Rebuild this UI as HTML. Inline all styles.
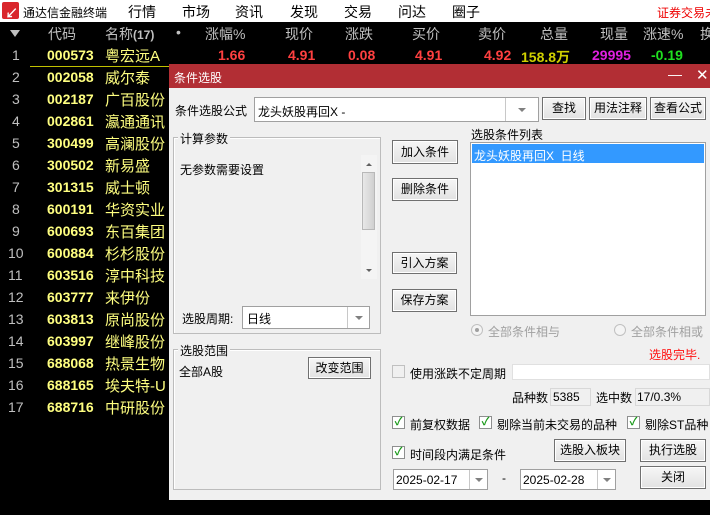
<!DOCTYPE html>
<html><head><meta charset="utf-8"><style>
*{margin:0;padding:0;box-sizing:border-box}
body{width:710px;height:515px;background:#000;position:relative;overflow:hidden;font-family:"Liberation Sans","Noto Sans CJK SC","WenQuanYi Zen Hei",sans-serif;font-size:12px}
.a{position:absolute;white-space:nowrap}
.menu{left:0;top:0;width:710px;height:22px;background:#fff}
.mi{top:2px;font-size:14px;color:#000}
.hd{color:#c0c0c0;font-size:14px;top:24px}
.num{color:#c0c0c0;font-size:14px;left:12px}
.code{color:#ffff80;font-size:14px;font-weight:bold;left:47px}
.name{color:#ffff80;font-size:15px;left:105px}
.dlg{left:169px;top:64px;width:541px;height:436px;background:#f0f0f0}
.btn{position:absolute;background:linear-gradient(#f6f6f6,#e2e2e2);border:1px solid #707070;text-align:center;font-size:12px;color:#000;box-shadow:inset 0 0 0 1px #fff}
.t{position:absolute;white-space:nowrap;font-size:12px;color:#000}
.box{position:absolute;background:#fff;border:1px solid #a0a0a0}
.grp{position:absolute;border:1px solid #bcbcbc;box-shadow:1px 1px 0 #fff inset}
.chk{position:absolute;width:13px;height:13px;border:1px solid #8e8f8f;background:#fff;color:#1a9a1a;font-size:11px;line-height:11px;text-align:center;font-weight:bold}
.arr{position:absolute;width:0;height:0;border-left:4px solid transparent;border-right:4px solid transparent;border-top:4px solid #808080}
</style></head><body>
<div class="a menu"></div>
<div class="a" style="left:2px;top:2px;width:17px;height:17px;background:#d9262c;border-radius:2px"></div>
<div class="a" style="left:5px;top:3px;color:#fff;font-weight:bold;font-size:13px">↙</div>
<div class="a" style="left:23px;top:4px;font-size:12px">通达信金融终端</div>
<div class="a mi" style="left:128px">行情</div>
<div class="a mi" style="left:182px">市场</div>
<div class="a mi" style="left:235px">资讯</div>
<div class="a mi" style="left:290px">发现</div>
<div class="a mi" style="left:344px">交易</div>
<div class="a mi" style="left:398px">问达</div>
<div class="a mi" style="left:452px">圈子</div>
<div class="a" style="left:657px;top:4px;font-size:12px;color:#e00">证券交易未</div>

<div class="a" style="left:10px;top:30px;width:0;height:0;border-left:5px solid transparent;border-right:5px solid transparent;border-top:7px solid #c0c0c0"></div>
<div class="a hd" style="left:48px">代码</div>
<div class="a hd" style="left:105px">名称<span style="font-size:12px;font-weight:bold">(17)</span></div>
<div class="a hd" style="left:176px">•</div>
<div class="a hd" style="left:205px">涨幅%</div>
<div class="a hd" style="left:285px">现价</div>
<div class="a hd" style="left:345px">涨跌</div>
<div class="a hd" style="left:412px">买价</div>
<div class="a hd" style="left:478px">卖价</div>
<div class="a hd" style="left:540px">总量</div>
<div class="a hd" style="left:600px">现量</div>
<div class="a hd" style="left:643px">涨速%</div>
<div class="a hd" style="left:700px">换</div>

<div class="a num" style="top:47px">1</div><div class="a code" style="top:47px">000573</div><div class="a name" style="top:45px">粤宏远A</div>
<div class="a" style="top:47px;left:218px;color:#ff4040;font-size:14px;font-weight:bold">1.66</div>
<div class="a" style="top:47px;left:288px;color:#ff4040;font-size:14px;font-weight:bold">4.91</div>
<div class="a" style="top:47px;left:348px;color:#ff4040;font-size:14px;font-weight:bold">0.08</div>
<div class="a" style="top:47px;left:415px;color:#ff4040;font-size:14px;font-weight:bold">4.91</div>
<div class="a" style="top:47px;left:484px;color:#ff4040;font-size:14px;font-weight:bold">4.92</div>
<div class="a" style="top:47px;left:521px;color:#d0d000;font-size:14px;font-weight:bold">158.8万</div>
<div class="a" style="top:47px;left:592px;color:#e020e0;font-size:14px;font-weight:bold">29995</div>
<div class="a" style="top:47px;left:651px;color:#20e020;font-size:14px;font-weight:bold">-0.19</div>
<div class="a" style="left:30px;top:66px;width:680px;height:1px;background:#c0c000"></div>

<div class="a num" style="top:69px">2</div><div class="a code" style="top:69px">002058</div><div class="a name" style="top:67px">威尔泰</div>
<div class="a num" style="top:91px">3</div><div class="a code" style="top:91px">002187</div><div class="a name" style="top:89px">广百股份</div>
<div class="a num" style="top:113px">4</div><div class="a code" style="top:113px">002861</div><div class="a name" style="top:111px">瀛通通讯</div>
<div class="a num" style="top:135px">5</div><div class="a code" style="top:135px">300499</div><div class="a name" style="top:133px">高澜股份</div>
<div class="a num" style="top:157px">6</div><div class="a code" style="top:157px">300502</div><div class="a name" style="top:155px">新易盛</div>
<div class="a num" style="top:179px">7</div><div class="a code" style="top:179px">301315</div><div class="a name" style="top:177px">威士顿</div>
<div class="a num" style="top:201px">8</div><div class="a code" style="top:201px">600191</div><div class="a name" style="top:199px">华资实业</div>
<div class="a num" style="top:223px">9</div><div class="a code" style="top:223px">600693</div><div class="a name" style="top:221px">东百集团</div>
<div class="a num" style="top:245px;left:8px">10</div><div class="a code" style="top:245px">600884</div><div class="a name" style="top:243px">杉杉股份</div>
<div class="a num" style="top:267px;left:8px">11</div><div class="a code" style="top:267px">603516</div><div class="a name" style="top:265px">淳中科技</div>
<div class="a num" style="top:289px;left:8px">12</div><div class="a code" style="top:289px">603777</div><div class="a name" style="top:287px">来伊份</div>
<div class="a num" style="top:311px;left:8px">13</div><div class="a code" style="top:311px">603813</div><div class="a name" style="top:309px">原尚股份</div>
<div class="a num" style="top:333px;left:8px">14</div><div class="a code" style="top:333px">603997</div><div class="a name" style="top:331px">继峰股份</div>
<div class="a num" style="top:355px;left:8px">15</div><div class="a code" style="top:355px">688068</div><div class="a name" style="top:353px">热景生物</div>
<div class="a num" style="top:377px;left:8px">16</div><div class="a code" style="top:377px">688165</div><div class="a name" style="top:375px">埃夫特-U</div>
<div class="a num" style="top:399px;left:8px">17</div><div class="a code" style="top:399px">688716</div><div class="a name" style="top:397px">中研股份</div>

<div class="a dlg"></div>
<div class="a" style="left:169px;top:64px;width:541px;height:24px;background:#b22e34"></div>
<div class="a" style="left:174px;top:69px;color:#fff;font-size:12px">条件选股</div>
<div class="a" style="left:668px;top:66px;color:#fff;font-size:14px">—</div>
<div class="a" style="left:696px;top:66px;color:#fff;font-size:15px">✕</div>

<div class="t" style="left:175px;top:102px">条件选股公式</div>
<div class="box" style="left:254px;top:97px;width:285px;height:25px"></div>
<div class="t" style="left:258px;top:103px">龙头妖股再回X -</div>
<div class="a" style="left:505px;top:98px;width:1px;height:23px;background:#c8c8c8"></div>
<div class="arr" style="left:518px;top:108px"></div>
<div class="btn" style="left:542px;top:97px;width:44px;height:23px;line-height:21px">查找</div>
<div class="btn" style="left:589px;top:97px;width:58px;height:23px;line-height:21px">用法注释</div>
<div class="btn" style="left:650px;top:97px;width:56px;height:23px;line-height:21px">查看公式</div>

<div class="grp" style="left:173px;top:137px;width:208px;height:197px"></div>
<div class="t" style="left:178px;top:130px;background:#f0f0f0;padding:0 2px">计算参数</div>
<div class="t" style="left:180px;top:161px">无参数需要设置</div>
<div class="a" style="left:361px;top:155px;width:16px;height:124px;background:#f4f4f4"></div>
<div class="a" style="left:362px;top:172px;width:13px;height:58px;background:linear-gradient(90deg,#e8e8e8,#d0d0d0);border:1px solid #b8b8b8"></div>
<div class="a" style="left:366px;top:163px;border-left:3px solid transparent;border-right:3px solid transparent;border-bottom:3px solid #606060;width:0"></div>
<div class="a" style="left:366px;top:269px;border-left:3px solid transparent;border-right:3px solid transparent;border-top:3px solid #606060;width:0"></div>
<div class="t" style="left:182px;top:310px">选股周期:</div>
<div class="box" style="left:242px;top:306px;width:128px;height:23px"></div>
<div class="t" style="left:247px;top:310px">日线</div>
<div class="a" style="left:347px;top:307px;width:1px;height:21px;background:#c8c8c8"></div>
<div class="arr" style="left:355px;top:316px"></div>

<div class="grp" style="left:173px;top:349px;width:208px;height:141px"></div>
<div class="t" style="left:178px;top:342px;background:#f0f0f0;padding:0 2px">选股范围</div>
<div class="t" style="left:179px;top:363px">全部A股</div>
<div class="btn" style="left:308px;top:357px;width:63px;height:22px;line-height:20px">改变范围</div>

<div class="btn" style="left:392px;top:140px;width:66px;height:24px;line-height:22px">加入条件</div>
<div class="btn" style="left:392px;top:178px;width:66px;height:23px;line-height:21px">删除条件</div>
<div class="btn" style="left:392px;top:252px;width:65px;height:22px;line-height:20px">引入方案</div>
<div class="btn" style="left:392px;top:289px;width:65px;height:23px;line-height:21px">保存方案</div>

<div class="t" style="left:471px;top:126px">选股条件列表</div>
<div class="box" style="left:470px;top:142px;width:236px;height:174px"></div>
<div class="a" style="left:472px;top:144px;width:232px;height:19px;background:#3399ff"></div>
<div class="t" style="left:474px;top:147px;color:#fff">龙头妖股再回X&nbsp; 日线</div>

<div class="a" style="left:471px;top:324px;width:12px;height:12px;border-radius:50%;border:1px solid #c0c0c0;background:#f4f4f4"></div>
<div class="a" style="left:475px;top:328px;width:4px;height:4px;border-radius:50%;background:#a0a0a0"></div>
<div class="t" style="left:488px;top:323px;color:#a0a0a0">全部条件相与</div>
<div class="a" style="left:614px;top:324px;width:12px;height:12px;border-radius:50%;border:1px solid #c0c0c0;background:#f4f4f4"></div>
<div class="t" style="left:631px;top:323px;color:#a0a0a0">全部条件相或</div>
<div class="t" style="left:649px;top:346px;color:#ff1010">选股完毕.</div>

<div class="chk" style="left:392px;top:365px;background:#f0f0f0;border-color:#c0c0c0"></div>
<div class="t" style="left:410px;top:365px">使用涨跌不定周期</div>
<div class="box" style="left:512px;top:364px;width:198px;height:16px;border-color:#e0e0e0"></div>
<div class="t" style="left:512px;top:389px">品种数</div>
<div class="a" style="left:550px;top:388px;width:41px;height:18px;border:1px solid #d8d8d8;background:#f0f0f0"></div>
<div class="t" style="left:553px;top:390px">5385</div>
<div class="t" style="left:596px;top:389px">选中数</div>
<div class="a" style="left:635px;top:388px;width:75px;height:18px;border:1px solid #d8d8d8;background:#f0f0f0"></div>
<div class="t" style="left:637px;top:390px">17/0.3%</div>

<div class="chk" style="left:392px;top:416px">✓</div><div class="t" style="left:410px;top:416px">前复权数据</div>
<div class="chk" style="left:479px;top:416px">✓</div><div class="t" style="left:497px;top:416px">剔除当前未交易的品种</div>
<div class="chk" style="left:627px;top:416px">✓</div><div class="t" style="left:645px;top:416px">剔除ST品种</div>

<div class="chk" style="left:392px;top:446px">✓</div><div class="t" style="left:410px;top:446px">时间段内满足条件</div>
<div class="btn" style="left:554px;top:439px;width:72px;height:23px;line-height:21px">选股入板块</div>
<div class="btn" style="left:640px;top:439px;width:66px;height:23px;line-height:21px">执行选股</div>

<div class="box" style="left:393px;top:469px;width:95px;height:21px"></div>
<div class="t" style="left:396px;top:473px">2025-02-17</div>
<div class="a" style="left:469px;top:470px;width:1px;height:19px;background:#c8c8c8"></div>
<div class="arr" style="left:475px;top:478px"></div>
<div class="t" style="left:502px;top:471px">-</div>
<div class="box" style="left:520px;top:469px;width:96px;height:21px"></div>
<div class="t" style="left:523px;top:473px">2025-02-28</div>
<div class="a" style="left:597px;top:470px;width:1px;height:19px;background:#c8c8c8"></div>
<div class="arr" style="left:603px;top:478px"></div>
<div class="btn" style="left:640px;top:466px;width:66px;height:23px;line-height:21px">关闭</div>
</body></html>
